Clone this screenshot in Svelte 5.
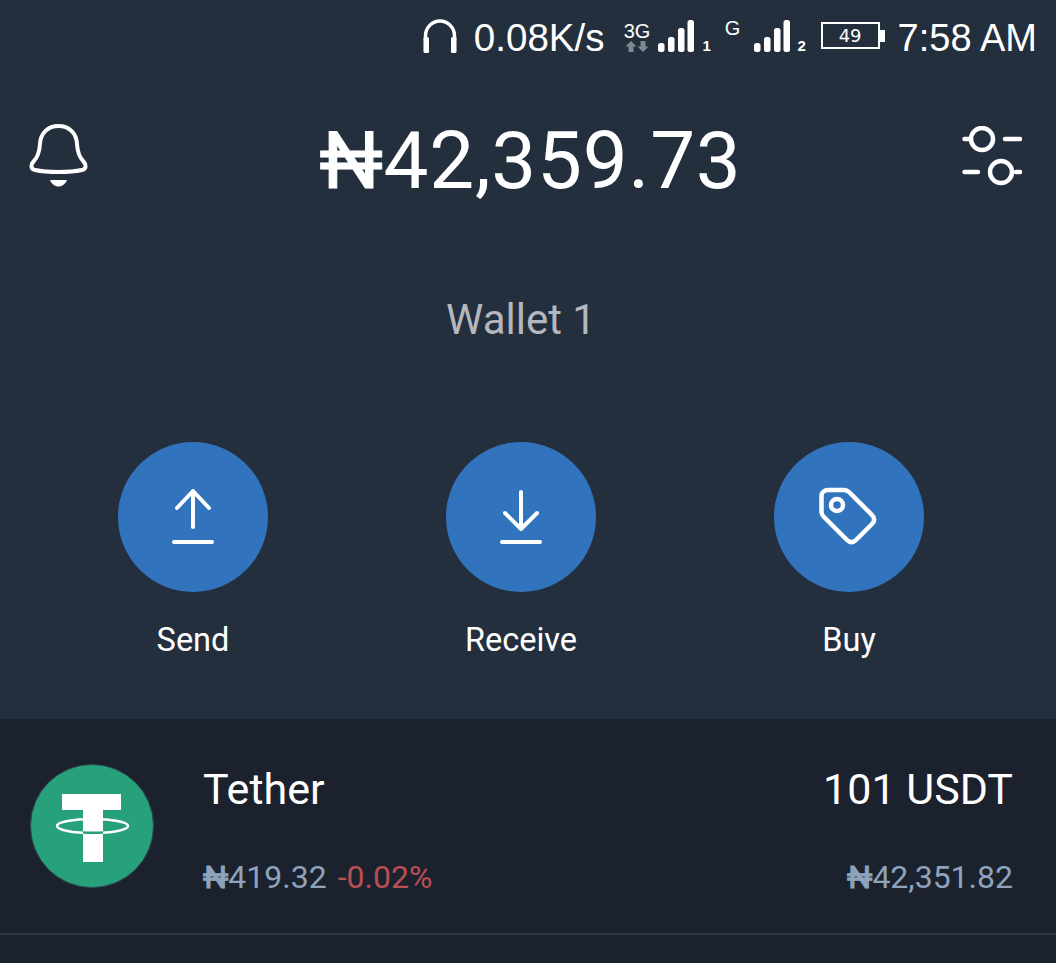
<script lang="ts">
    const actions = [
        { label: 'Send', icon: 'send' },
        { label: 'Receive', icon: 'receive' },
        { label: 'Buy', icon: 'buy' }
    ];
    const signalBars = [
        { x: 0, h: 9 },
        { x: 10, h: 15 },
        { x: 20, h: 24 },
        { x: 29.5, h: 32 }
    ];
</script>

{#snippet signal()}
    <svg class="signal" width="36" height="32" viewBox="0 0 36 32">
        {#each signalBars as bar}
            <rect x={bar.x} y={32 - bar.h} width="6.5" height={bar.h} rx="2.5" fill="#fff" />
        {/each}
    </svg>
{/snippet}

<div class="screen">
    <div class="status">
        <svg class="headphones" width="34" height="34" viewBox="0 0 34 34" fill="none">
            <path d="M2.5 22V17a14.5 15 0 0 1 29 0v5" stroke="#fff" stroke-width="3.5" />
            <rect x="0.5" y="18" width="5.5" height="16" rx="1.5" fill="#fff" />
            <rect x="28" y="18" width="5.5" height="16" rx="1.5" fill="#fff" />
        </svg>
        <span class="speed">0.08K/s</span>
        <span class="net net-3g">
            <span>3G</span>
            <svg width="24" height="11" viewBox="0 0 24 11" fill="#7f8791">
                <path d="M6 0l5.5 5.5h-3V11h-5V5.5h-3zM18 11l-5.5-5.5h3V0h5v5.5h3z" />
            </svg>
        </span>
        {@render signal()}
        <span class="sim sim-1">1</span>
        <span class="net net-g">G</span>
        {@render signal()}
        <span class="sim sim-2">2</span>
        <span class="battery"><span class="cell">49</span><span class="tip"></span></span>
        <span class="time">7:58 AM</span>
    </div>

    <header class="top">
        <svg class="bell" width="60" height="66" viewBox="0 0 60 66" fill="none">
            <path d="M29.5 3C19 3 11.5 10 11 21c-.5 8-2 13-6.5 17.5-3 3-3 7.5 1.5 8.5 7 1.5 15 2 23.500 2s16.500-.5 23.500-2c4.500-1 4.500-5.500 1.500-8.500C50 34 48.500 29 48 21 47.500 10 40 3 29.500 3z" stroke="#fff" stroke-width="4" stroke-linejoin="round" />
            <path d="M21 57h17c-1.500 4-5 6.500-8.500 6.500S22.500 61 21 57z" fill="#fff" />
        </svg>
        <div class="balance"><span class="naira">₦</span>42,359.73</div>
        <svg class="tune" width="60" height="60" viewBox="0 0 60 60" fill="none" stroke="#fff" stroke-width="4.5" stroke-linecap="round">
            <path d="M2.5 13H7M43 13h15M2.5 46H16M54 46h4" />
            <circle cx="20" cy="13" r="11" />
            <circle cx="39" cy="46" r="11" />
        </svg>
    </header>

    <div class="wallet">Wallet 1</div>

    <div class="actions">
        {#each actions as action}
            <div class="action">
                <div class="circle">
                    {#if action.icon === 'send'}
                        <svg width="44" height="56" viewBox="0 0 44 56" fill="none" stroke="#fff" stroke-width="4" stroke-linecap="round" stroke-linejoin="round">
                            <path d="M22 2v36M6 19 22 2l16 17M3 53h38" />
                        </svg>
                    {:else if action.icon === 'receive'}
                        <svg width="44" height="56" viewBox="0 0 44 56" fill="none" stroke="#fff" stroke-width="4" stroke-linecap="round" stroke-linejoin="round">
                            <path d="M22 3v37M6 24l16 16 16-16M3 53h38" />
                        </svg>
                    {:else}
                        <svg width="60" height="60" viewBox="0 0 60 60" fill="none" stroke="#fff" stroke-width="4.5" stroke-linejoin="round">
                            <path d="M9 3h16c2 0 4 1 5.5 2.5L53 28c3 3 3 6 0 9L37 53c-3 3-6 3-9 0L5 30c-1.500-1.500-2.500-3-2.500-5V9c0-3.500 3-6 6.500-6z" />
                            <circle cx="18" cy="18" r="6" />
                        </svg>
                    {/if}
                </div>
                <span class="action-label">{action.label}</span>
            </div>
        {/each}
    </div>

    <section class="list">
        <div class="asset">
            <svg class="coin" width="124" height="124" viewBox="0 0 124 124">
                <circle cx="62" cy="62" r="61.5" fill="#26a17b" stroke="#2b4a50" stroke-width="1" />
                <ellipse cx="62.5" cy="62" rx="35.5" ry="7" fill="none" stroke="#fff" stroke-width="2.5" />
                <path d="M32 30h59v16H73v52H53V46H32z" fill="#fff" />
                <path d="M53 68.5c7 .5 13 .5 20 0" fill="none" stroke="#26a17b" stroke-width="2.5" />
            </svg>
            <div class="asset-body">
                <div class="row">
                    <span class="name">Tether</span>
                    <span class="amount">101 USDT</span>
                </div>
                <div class="row">
                    <span class="price"><span class="naira">₦</span>419.32<span class="change">-0.02%</span></span>
                    <span class="price"><span class="naira">₦</span>42,351.82</span>
                </div>
            </div>
        </div>
    </section>
</div>

<style>
    :global(body) {
        margin: 0;
        background: #242f3e;
    }

    .screen {
        display: flex;
        flex-direction: column;
        width: 1056px;
        height: 963px;
        overflow: hidden;
        color: #fff;
        background: #242f3e;
        font-family: Roboto, "Liberation Sans", sans-serif;
    }

    .status {
        display: flex;
        align-items: center;
        justify-content: flex-end;
        height: 76px;
        padding-right: 19px;
        font-family: "Liberation Sans", sans-serif;
        font-size: 38px;
        box-sizing: border-box;
    }

    .headphones {
        margin: 0 17px 4px 0;
    }

    .speed {
        margin-right: 20px;
        font-size: 38.6px;
        white-space: nowrap;
    }

    .net {
        display: flex;
        flex-direction: column;
        align-items: center;
        font-size: 20px;
    }

    .net-3g {
        width: 25px;
        margin: 0 8px 4px 0;
        line-height: 20px;
    }

    .net-g {
        align-self: flex-start;
        width: 16px;
        margin: 18px 13px 0 14px;
        line-height: 20px;
    }

    .signal {
        margin-bottom: 4px;
    }

    .sim {
        align-self: flex-end;
        width: 8px;
        margin-bottom: 23px;
        font-size: 15px;
        font-weight: bold;
        line-height: 14px;
    }

    .sim-1 {
        margin-left: 9px;
    }

    .sim-2 {
        margin-left: 8px;
    }

    .battery {
        display: flex;
        align-items: center;
        margin: 0 13px 5px 15px;
    }

    .cell {
        width: 59px;
        height: 27px;
        border: 2px solid #fff;
        box-sizing: border-box;
        font-family: "DejaVu Sans", sans-serif;
        font-size: 18px;
        line-height: 23px;
        text-align: center;
    }

    .tip {
        width: 5px;
        height: 12px;
        background: #fff;
    }

    .time {
        white-space: nowrap;
    }

    .top {
        display: flex;
        align-items: center;
        justify-content: space-between;
        height: 166px;
        padding: 0 34px 0 29px;
        box-sizing: border-box;
    }

    .bell,
    .tune {
        margin-bottom: 6px;
    }

    .balance {
        margin: 4px 0 0 10px;
        font-size: 80px;
        letter-spacing: 0.7px;
    }

    .naira {
        -webkit-text-stroke: 1px currentColor;
    }

    .wallet {
        margin-top: 41px;
        padding-right: 14px;
        color: #b4b7bd;
        font-size: 42px;
        line-height: 74px;
        text-align: center;
    }

    .actions {
        display: grid;
        grid-template-columns: repeat(3, 150px);
        gap: 178px;
        margin-top: 85px;
        padding-left: 118px;
    }

    .action {
        display: flex;
        flex-direction: column;
        align-items: center;
    }

    .circle {
        display: flex;
        align-items: center;
        justify-content: center;
        width: 150px;
        height: 150px;
        border-radius: 50%;
        background: #3273bd;
    }

    .action-label {
        margin-top: 27px;
        font-size: 32.5px;
        line-height: 42px;
        white-space: nowrap;
    }

    .list {
        flex: 1;
        margin-top: 58px;
        background: #1b222d;
    }

    .asset {
        display: flex;
        align-items: center;
        height: 216px;
        padding: 0 43px 0 30px;
        border-bottom: 2px solid #2c3646;
        box-sizing: border-box;
    }

    .asset-body {
        display: flex;
        flex: 1;
        flex-direction: column;
        gap: 44px;
        margin-left: 49px;
        padding-top: 10px;
    }

    .row {
        display: flex;
        align-items: baseline;
        justify-content: space-between;
    }

    .name,
    .amount {
        font-size: 43px;
        line-height: 48px;
    }

    .price {
        color: #8ea3bc;
        font-size: 32px;
        line-height: 40px;
    }

    .change {
        margin-left: 11px;
        color: #b94f54;
    }
</style>
